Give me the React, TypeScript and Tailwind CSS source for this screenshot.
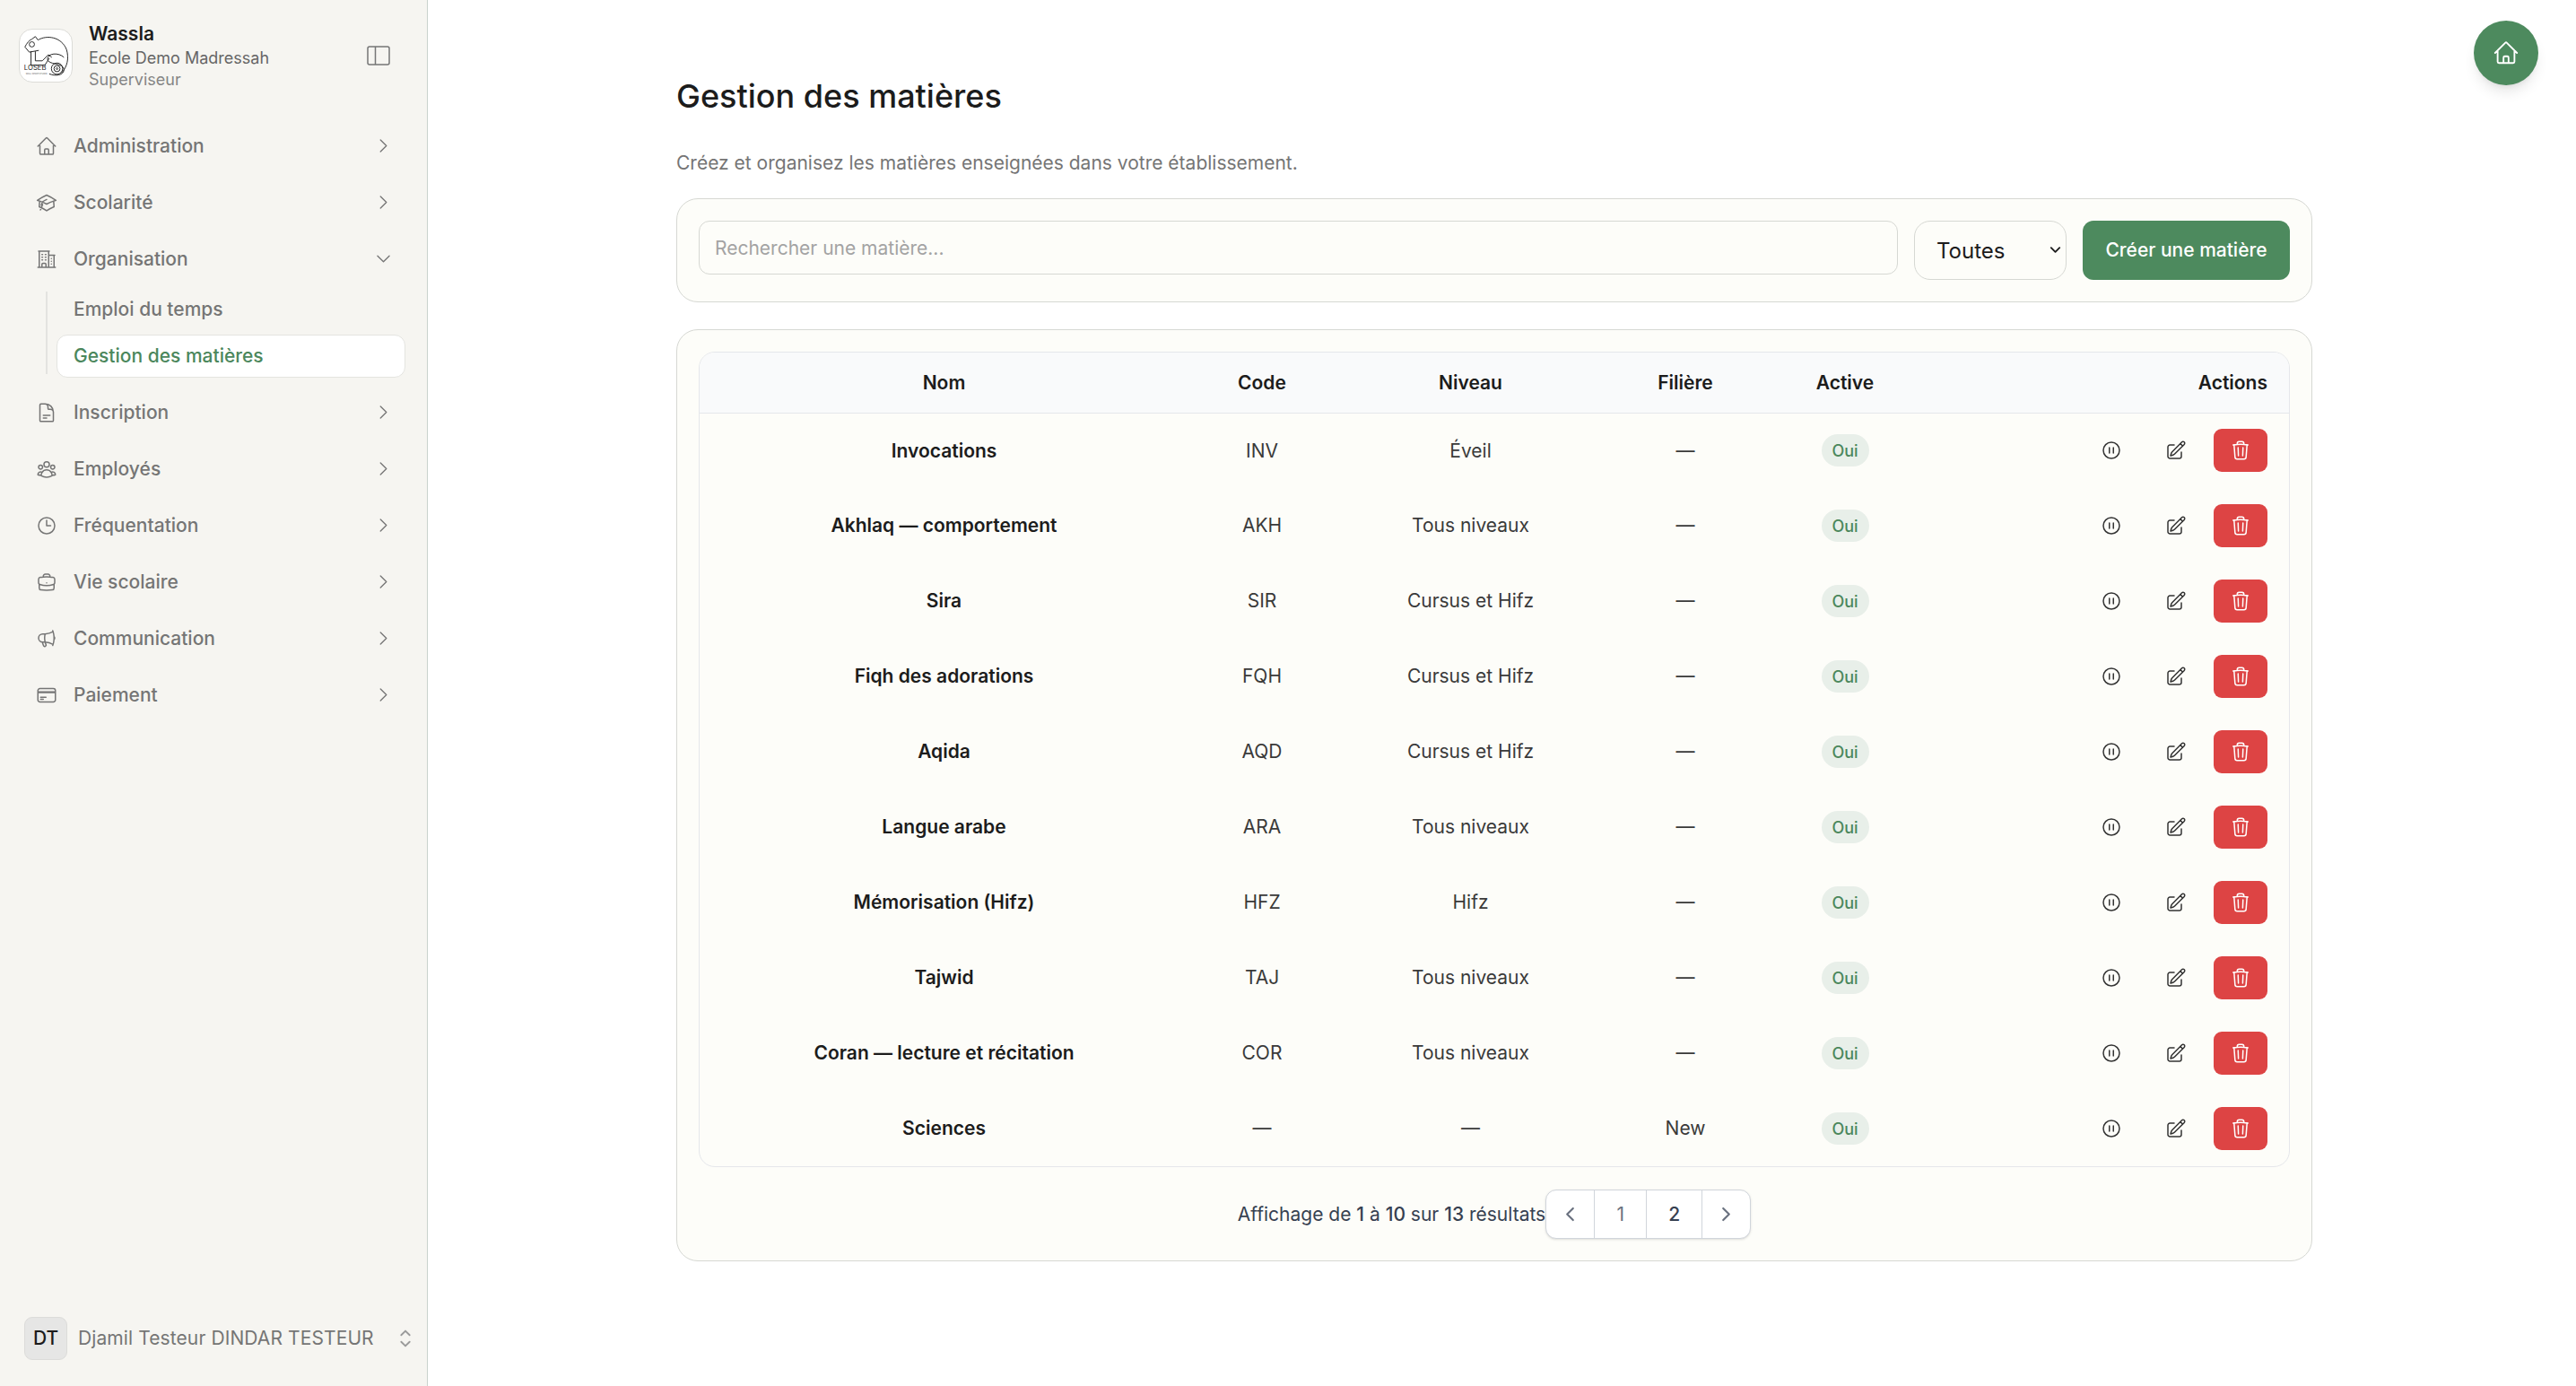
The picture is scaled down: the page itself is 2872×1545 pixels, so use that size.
import type { ReactNode } from "react";
import {
  HiChevronUpDown,
  HiOutlineAcademicCap,
  HiOutlineBriefcase,
  HiOutlineBuildingOffice2,
  HiOutlineChevronDown,
  HiOutlineChevronLeft,
  HiOutlineChevronRight,
  HiOutlineClock,
  HiOutlineCreditCard,
  HiOutlineDocumentText,
  HiOutlineHome,
  HiOutlineMegaphone,
  HiOutlinePauseCircle,
  HiOutlinePencilSquare,
  HiOutlineTrash,
  HiOutlineUserGroup,
} from "react-icons/hi2";

const subjects = [
  { name: "Invocations", code: "INV", level: "Éveil", track: "—" },
  { name: "Akhlaq — comportement", code: "AKH", level: "Tous niveaux", track: "—" },
  { name: "Sira", code: "SIR", level: "Cursus et Hifz", track: "—" },
  { name: "Fiqh des adorations", code: "FQH", level: "Cursus et Hifz", track: "—" },
  { name: "Aqida", code: "AQD", level: "Cursus et Hifz", track: "—" },
  { name: "Langue arabe", code: "ARA", level: "Tous niveaux", track: "—" },
  { name: "Mémorisation (Hifz)", code: "HFZ", level: "Hifz", track: "—" },
  { name: "Tajwid", code: "TAJ", level: "Tous niveaux", track: "—" },
  { name: "Coran — lecture et récitation", code: "COR", level: "Tous niveaux", track: "—" },
  { name: "Sciences", code: "—", level: "—", track: "New" },
];

const NavRow = ({ icon, label, open }: { icon: ReactNode; label: string; open?: boolean }) => (
  <div className="flex h-[63px] items-center pl-[18px] pr-[16px] text-[21px] font-medium text-[#757575]">
    <span className="mr-[18px] text-[24px]">{icon}</span>
    <span className="flex-1">{label}</span>
    {open ? (
      <HiOutlineChevronDown className="text-[21px]" />
    ) : (
      <HiOutlineChevronRight className="text-[21px]" />
    )}
  </div>
);

// rough drawing of the school logo
const Logo = () => (
  <div className="flex h-[60px] w-[60px] items-center justify-center overflow-hidden rounded-[15px] border border-[#dcdcd8] bg-white">
    <svg width="60" height="60" viewBox="0 0 60 60" fill="none" stroke="#222" strokeWidth="1">
      <path d="M21 12l-3-4-4 3c-3 1-6 5-8 9l5 6 11-2" />
      <path d="M21 12C31 6 48 8 54 23c3 10 1 20-6 27" />
      <circle cx="14" cy="17" r="3" />
      <path d="M13 25v16h16l5-8" />
      <path d="M18 25v11h8l7-7 4 3" />
      <path d="M51 32c-6-6-19-5-19 2 0 7 19 4 19 12 0 7-10 8-17 5" />
      <circle cx="43" cy="45" r="6.5" />
      <circle cx="43" cy="45" r="3.5" />
      <circle cx="43" cy="45" r="1" />
      <text x="5" y="47" fontFamily="Inter, sans-serif" fontSize="8" fill="#222" stroke="none">
        LOSEB
      </text>
      <text x="7" y="52" fontFamily="Inter, sans-serif" fontSize="2.4" fill="#555" stroke="none">
        WALL SPACE STUDIO
      </text>
    </svg>
  </div>
);

const Sidebar = () => (
  <aside className="flex h-full w-[477px] shrink-0 flex-col border-r border-[#c9d2cc] bg-[#f6f5f1]">
    <div className="flex h-[131px] items-start pl-[21px] pr-[41px]">
      <div className="mt-[32px]">
        <Logo />
      </div>
      <div className="ml-[18px] mt-[23px] flex-1">
        <p className="text-[21px] font-semibold leading-[30px] text-[#1c1c1c]">Wassla</p>
        <p className="text-[18px] leading-[24px] text-[#666666]">Ecole Demo Madressah</p>
        <p className="text-[18px] leading-[24px] text-[#858585]">Superviseur</p>
      </div>
      <svg className="mt-[51px]" width="26" height="22" viewBox="0 0 26 22" fill="none" stroke="#757575" strokeWidth="1.5">
        <rect x="1" y="1" width="24" height="20" rx="2" />
        <path d="M9.5 1v20" />
      </svg>
    </div>
    <nav className="px-[22px]">
      <NavRow icon={<HiOutlineHome />} label="Administration" />
      <NavRow icon={<HiOutlineAcademicCap />} label="Scolarité" />
      <NavRow icon={<HiOutlineBuildingOffice2 />} label="Organisation" open />
      <div className="mb-[11px] ml-[29px] mr-[2px] mt-[5px] flex h-[92px] flex-col justify-center gap-[4px] border-l-2 border-[#e3e3e0] pl-[10px] text-[21px] font-medium">
        <div className="flex h-[48px] shrink-0 items-center px-[19px] text-[#757575]">Emploi du temps</div>
        <div className="flex h-[48px] shrink-0 items-center rounded-[12px] border border-[#e4e4e0] bg-white px-[18px] text-[#4b875c]">
          Gestion des matières
        </div>
      </div>
      <NavRow icon={<HiOutlineDocumentText />} label="Inscription" />
      <NavRow icon={<HiOutlineUserGroup />} label="Employés" />
      <NavRow icon={<HiOutlineClock />} label="Fréquentation" />
      <NavRow icon={<HiOutlineBriefcase />} label="Vie scolaire" />
      <NavRow icon={<HiOutlineMegaphone />} label="Communication" />
      <NavRow icon={<HiOutlineCreditCard />} label="Paiement" />
    </nav>
    <div className="mt-auto mb-[29px] flex items-center pl-[27px] pr-[9px]">
      <div className="flex h-[48px] w-[48px] items-center justify-center rounded-[9px] border border-[#dcdcda] bg-[#e6e6e5] text-[21px] font-medium text-[#1c1c1c]">
        DT
      </div>
      <span className="ml-[12px] flex-1 whitespace-nowrap text-[21px] tracking-[0.1px] text-[#757575]">
        Djamil Testeur DINDAR TESTEUR
      </span>
      <HiChevronUpDown className="text-[30px] text-[#9a9a9a]" />
    </div>
  </aside>
);

const Toolbar = () => (
  <div className="mt-[24px] flex h-[116px] items-start gap-[18px] rounded-[24px] border border-[#d6d8d3] bg-[#fdfdf9] px-[24px] pt-[24px]">
    <input
      readOnly
      placeholder="Rechercher une matière..."
      className="h-[60px] flex-1 rounded-[12px] border border-[#d6d8d3] bg-[#fdfdf9] px-[17px] text-[21px] placeholder:text-[#a3a3a3]"
    />
    <div className="relative w-[170px]">
      <select className="h-[66px] w-full appearance-none rounded-[18px] border border-[#d6d8d3] bg-[#fdfdf9] pl-[24px] pt-[1px] text-[24px] text-[#1c1c1c]">
        <option>Toutes</option>
      </select>
      <HiOutlineChevronDown
        className="pointer-events-none absolute right-[5px] top-[25px] text-[15px] text-[#1c1c1c]"
        style={{ strokeWidth: 3 }}
      />
    </div>
    <button className="h-[66px] w-[231px] rounded-[12px] bg-[#4d8a5e] text-[21px] font-medium text-white">
      Créer une matière
    </button>
  </div>
);

const SubjectsTable = () => (
  <div className="overflow-hidden rounded-[18px] border border-[#e5e7eb]">
    <table className="w-full table-fixed border-collapse text-center text-[21px]">
      <thead>
        <tr className="h-[67px] border-b border-[#e5e7eb] bg-[#f9fafb] text-[#1c1c1c]">
          <th className="w-[545px] font-semibold">Nom</th>
          <th className="w-[164px] font-semibold">Code</th>
          <th className="w-[301px] font-semibold">Niveau</th>
          <th className="w-[178px] font-semibold">Filière</th>
          <th className="w-[178px] font-semibold">Active</th>
          <th className="pr-[24px] text-right font-semibold">Actions</th>
        </tr>
      </thead>
      <tbody className="text-[#3a3a3a]">
        {subjects.map((s) => (
          <tr key={s.name} className="h-[84px]">
            <td className="font-semibold text-[#1c1c1c]">{s.name}</td>
            <td>{s.code}</td>
            <td>{s.level}</td>
            <td>{s.track}</td>
            <td>
              <span className="inline-flex h-[36px] w-[53px] items-center justify-center rounded-full bg-[#e8efe9] text-[18px] font-medium text-[#4b875c]">
                Oui
              </span>
            </td>
            <td className="pr-[24px]">
              <div className="flex justify-end gap-[12px]">
                <button className="flex h-[48px] w-[60px] items-center justify-center text-[24px] text-[#333333]">
                  <HiOutlinePauseCircle />
                </button>
                <button className="flex h-[48px] w-[60px] items-center justify-center text-[24px] text-[#333333]">
                  <HiOutlinePencilSquare />
                </button>
                <button className="flex h-[48px] w-[60px] items-center justify-center rounded-[9px] bg-[#dd4444] text-[24px] text-white">
                  <HiOutlineTrash />
                </button>
              </div>
            </td>
          </tr>
        ))}
      </tbody>
    </table>
  </div>
);

const Pagination = () => (
  <div className="mt-[25px] flex items-center justify-center">
    <p className="text-[21px] text-[#374151]">
      Affichage de <span className="font-medium">1</span> à <span className="font-medium">10</span> sur{" "}
      <span className="font-medium">13</span> résultats
    </p>
    <div className="flex h-[55px] overflow-hidden rounded-[12px] border border-[#d1d5db] bg-white text-[21px] shadow-sm">
      <span className="flex w-[53px] items-center justify-center text-[#6b7280]">
        <HiOutlineChevronLeft style={{ strokeWidth: 2.5 }} />
      </span>
      <span className="flex w-[58px] items-center justify-center border-l border-[#d1d5db] text-[#6b7280]">1</span>
      <span className="flex w-[62px] items-center justify-center border-l border-[#d1d5db] font-medium text-[#374151]">2</span>
      <span className="flex w-[54px] items-center justify-center border-l border-[#d1d5db] text-[#6b7280]">
        <HiOutlineChevronRight style={{ strokeWidth: 2.5 }} />
      </span>
    </div>
  </div>
);

export default function App() {
  return (
    <div className="relative flex h-screen overflow-hidden bg-white font-['Inter',sans-serif]">
      <Sidebar />
      <main className="ml-[277px] w-[1824px] pt-[83px]">
        <h1 className="text-[36px] font-medium leading-[48px] text-[#1c1c1c]">Gestion des matières</h1>
        <p className="mt-[35px] text-[21px] leading-[31px] text-[#757575]">
          Créez et organisez les matières enseignées dans votre établissement.
        </p>
        <Toolbar />
        <section className="mt-[30px] h-[1039px] rounded-[24px] border border-[#d6d8d3] bg-[#fdfdf9] px-[24px] pt-[24px]">
          <SubjectsTable />
          <Pagination />
        </section>
      </main>
      <button className="absolute right-[42px] top-[23px] flex h-[72px] w-[72px] items-center justify-center rounded-full bg-[#4d8a5e] text-[30px] text-white shadow-lg">
        <HiOutlineHome />
      </button>
    </div>
  );
}
